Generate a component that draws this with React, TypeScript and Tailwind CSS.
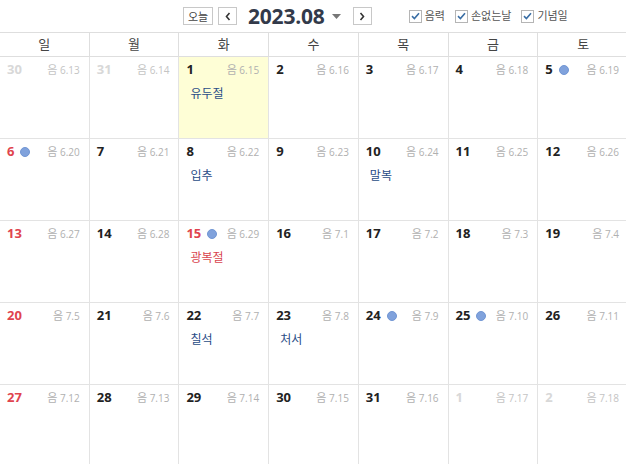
import React from "react";

type Cell = {
  d: number;
  lunar: string;
  out?: boolean;
  sun?: boolean;
  today?: boolean;
  dot?: boolean;
  label?: string;
  red?: boolean;
};

const rows: Cell[][] = [
  [
    { d: 30, lunar: "6.13", out: true, sun: true },
    { d: 31, lunar: "6.14", out: true },
    { d: 1, lunar: "6.15", today: true, label: "유두절" },
    { d: 2, lunar: "6.16" },
    { d: 3, lunar: "6.17" },
    { d: 4, lunar: "6.18" },
    { d: 5, lunar: "6.19", dot: true },
  ],
  [
    { d: 6, lunar: "6.20", sun: true, dot: true },
    { d: 7, lunar: "6.21" },
    { d: 8, lunar: "6.22", label: "입추" },
    { d: 9, lunar: "6.23" },
    { d: 10, lunar: "6.24", label: "말복" },
    { d: 11, lunar: "6.25" },
    { d: 12, lunar: "6.26" },
  ],
  [
    { d: 13, lunar: "6.27", sun: true },
    { d: 14, lunar: "6.28" },
    { d: 15, lunar: "6.29", red: true, dot: true, label: "광복절" },
    { d: 16, lunar: "7.1" },
    { d: 17, lunar: "7.2" },
    { d: 18, lunar: "7.3" },
    { d: 19, lunar: "7.4" },
  ],
  [
    { d: 20, lunar: "7.5", sun: true },
    { d: 21, lunar: "7.6" },
    { d: 22, lunar: "7.7", label: "칠석" },
    { d: 23, lunar: "7.8", label: "처서" },
    { d: 24, lunar: "7.9", dot: true },
    { d: 25, lunar: "7.10", dot: true },
    { d: 26, lunar: "7.11" },
  ],
  [
    { d: 27, lunar: "7.12", sun: true },
    { d: 28, lunar: "7.13" },
    { d: 29, lunar: "7.14" },
    { d: 30, lunar: "7.15" },
    { d: 31, lunar: "7.16" },
    { d: 1, lunar: "7.17", out: true },
    { d: 2, lunar: "7.18", out: true },
  ],
];

const days = ["일", "월", "화", "수", "목", "금", "토"];

function Check({ label }: { label: string }) {
  return (
    <div className="flex items-center gap-[3px]">
      <div className="w-[13px] h-[13px] border border-[#b5b5b5] bg-white flex items-center justify-center">
        <svg width="9" height="8" viewBox="0 0 9 8">
          <path d="M1 4.2 L3.4 6.5 L8 1.2" stroke="#3a6ea5" strokeWidth="1.6" fill="none" />
        </svg>
      </div>
      <span className="text-[11px] text-[#555]">{label}</span>
    </div>
  );
}

export default function App() {
  return (
    <div
      className="w-[626px] h-[464px] overflow-hidden bg-white"
      style={{ fontFamily: '"Open Sans", "Noto Sans CJK KR", sans-serif' }}
    >
      <div className="h-[32px] flex items-center pl-[183px]">
        <button className="h-[18px] w-[30px] border border-[#c8c8c8] bg-white text-[11px] text-[#444] flex items-center justify-center leading-none">
          오늘
        </button>
        <button className="ml-[5px] h-[18px] w-[19px] border border-[#c8c8c8] bg-white flex items-center justify-center">
          <svg width="6" height="9" viewBox="0 0 6 9">
            <path d="M4.5 1 L1.5 4.5 L4.5 8" stroke="#333" strokeWidth="1.6" fill="none" />
          </svg>
        </button>
        <span className="ml-[11px] text-[21px] font-bold text-[#333a4a] leading-none tracking-[-0.2px]">
          2023.08
        </span>
        <svg className="ml-[7px]" width="9" height="5" viewBox="0 0 9 5">
          <path d="M0 0 L9 0 L4.5 5 Z" fill="#777" />
        </svg>
        <button className="ml-[12px] h-[18px] w-[19px] border border-[#c8c8c8] bg-white flex items-center justify-center">
          <svg width="6" height="9" viewBox="0 0 6 9">
            <path d="M1.5 1 L4.5 4.5 L1.5 8" stroke="#333" strokeWidth="1.6" fill="none" />
          </svg>
        </button>
        <div className="ml-[37px] flex items-center gap-[10px]">
          <Check label="음력" />
          <Check label="손없는날" />
          <Check label="기념일" />
        </div>
      </div>
      <div className="w-[628px]">
        <div className="grid grid-cols-7 h-[25px] border-t border-b border-[#dedede]">
          {days.map((d, i) => (
            <div
              key={d}
              className={`flex items-center justify-center text-[13px] text-[#444] ${i < 6 ? "border-r border-[#dedede]" : ""}`}
            >
              {d}
            </div>
          ))}
        </div>
        {rows.map((row, ri) => (
          <div key={ri} className="grid grid-cols-7 h-[82px] border-b border-[#e3e3e3]">
            {row.map((c, ci) => {
              const numColor = c.out
                ? "text-[#d8d8d8]"
                : c.sun || c.red
                ? "text-[#e0444e]"
                : "text-[#222]";
              return (
                <div
                  key={ci}
                  className={`${ci < 6 ? "border-r border-[#e3e3e3]" : ""} ${c.today ? "bg-[#fefed6]" : ""} pt-[4px] pl-[7px] pr-[9px]`}
                >
                  <div className="flex items-center h-[18px]">
                    <span className={`text-[13px] font-bold ${numColor}`}>{c.d}</span>
                    {c.dot && (
                      <span className="ml-[6px] w-[10px] h-[10px] rounded-full bg-[#80a2dc] border border-[#7196d4]" />
                    )}
                    <span
                      className={`ml-auto text-[10px] ${c.out ? "text-[#c4c4c4]" : "text-[#b0b0b0]"}`}
                    >
                      <span className="text-[11px]">음</span> {c.lunar}
                    </span>
                  </div>
                  {c.label && (
                    <div
                      className={`mt-[6px] pl-[4px] text-[12px] ${c.red ? "text-[#d9444e]" : "text-[#2a4d87]"}`}
                    >
                      {c.label}
                    </div>
                  )}
                </div>
              );
            })}
          </div>
        ))}
      </div>
    </div>
  );
}
